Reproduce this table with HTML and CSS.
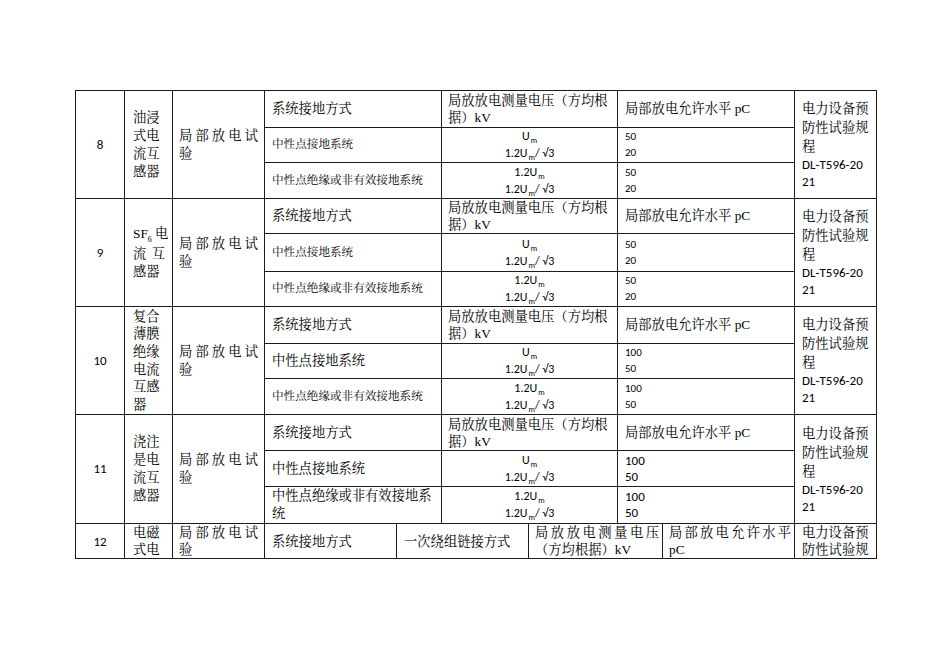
FILE: index.html
```
<!DOCTYPE html>
<html lang="zh-CN">
<head>
<meta charset="utf-8">
<title>局部放电试验</title>
<link rel="stylesheet" href="styles.css">
</head>
<body>
<div class="page">
<table class="spec">
<colgroup>
<col class="c1"><col class="c2"><col class="c3"><col class="c4"><col class="c5"><col class="c6"><col class="c7"><col class="c8"><col class="c9"><col class="c10">
</colgroup>
<tbody>
<!-- 8 -->
<tr class="h37">
<td rowspan="3" class="num">8</td>
<td rowspan="3" class="name"><div>油浸</div><div>式电</div><div>流互</div><div>感器</div></td>
<td rowspan="3" class="test"><div class="jl">局部放电试</div><div>验</div></td>
<td colspan="2" class="lbl">系统接地方式</td>
<td colspan="2" class="hdr">局放放电测量电压（方均根据）kV</td>
<td colspan="2" class="hdr2">局部放电允许水平 pC</td>
<td rowspan="3" class="std"><div>电力设备预</div><div>防性试验规</div><div>程</div><div class="lat">DL-T596-20</div><div class="lat">21</div></td>
</tr>
<tr class="h35">
<td colspan="2" class="lbl sm">中性点接地系统</td>
<td colspan="2" class="val"><div>U<span class="sb">m</span></div><div>1.2U<span class="sb">m</span>/ √3</div></td>
<td colspan="2" class="lvl"><div>50</div><div>20</div></td>
</tr>
<tr class="h36">
<td colspan="2" class="lbl sm">中性点绝缘或非有效接地系统</td>
<td colspan="2" class="val"><div>1.2U<span class="sb">m</span></div><div>1.2U<span class="sb">m</span>/ √3</div></td>
<td colspan="2" class="lvl"><div>50</div><div>20</div></td>
</tr>
<!-- 9 -->
<tr class="h35">
<td rowspan="3" class="num">9</td>
<td rowspan="3" class="name"><div class="nw">SF<span class="sb6">6</span> 电</div><div class="jl">流互</div><div>感器</div></td>
<td rowspan="3" class="test"><div class="jl">局部放电试</div><div>验</div></td>
<td colspan="2" class="lbl">系统接地方式</td>
<td colspan="2" class="hdr">局放放电测量电压（方均根据）kV</td>
<td colspan="2" class="hdr2">局部放电允许水平 pC</td>
<td rowspan="3" class="std"><div>电力设备预</div><div>防性试验规</div><div>程</div><div class="lat">DL-T596-20</div><div class="lat">21</div></td>
</tr>
<tr class="h38">
<td colspan="2" class="lbl sm">中性点接地系统</td>
<td colspan="2" class="val"><div>U<span class="sb">m</span></div><div>1.2U<span class="sb">m</span>/ √3</div></td>
<td colspan="2" class="lvl"><div>50</div><div>20</div></td>
</tr>
<tr class="h34">
<td colspan="2" class="lbl sm">中性点绝缘或非有效接地系统</td>
<td colspan="2" class="val"><div>1.2U<span class="sb">m</span></div><div>1.2U<span class="sb">m</span>/ √3</div></td>
<td colspan="2" class="lvl"><div>50</div><div>20</div></td>
</tr>
<!-- 10 -->
<tr class="h37">
<td rowspan="3" class="num">10</td>
<td rowspan="3" class="name tight"><div>复合</div><div>薄膜</div><div>绝缘</div><div>电流</div><div>互感</div><div>器</div></td>
<td rowspan="3" class="test"><div class="jl">局部放电试</div><div>验</div></td>
<td colspan="2" class="lbl">系统接地方式</td>
<td colspan="2" class="hdr">局放放电测量电压（方均根据）kV</td>
<td colspan="2" class="hdr2">局部放电允许水平 pC</td>
<td rowspan="3" class="std"><div>电力设备预</div><div>防性试验规</div><div>程</div><div class="lat">DL-T596-20</div><div class="lat">21</div></td>
</tr>
<tr class="h35">
<td colspan="2" class="lbl">中性点接地系统</td>
<td colspan="2" class="val"><div>U<span class="sb">m</span></div><div>1.2U<span class="sb">m</span>/ √3</div></td>
<td colspan="2" class="lvl"><div>100</div><div>50</div></td>
</tr>
<tr class="h36">
<td colspan="2" class="lbl sm">中性点绝缘或非有效接地系统</td>
<td colspan="2" class="val"><div>1.2U<span class="sb">m</span></div><div>1.2U<span class="sb">m</span>/ √3</div></td>
<td colspan="2" class="lvl"><div>100</div><div>50</div></td>
</tr>
<!-- 11 -->
<tr class="h36">
<td rowspan="3" class="num">11</td>
<td rowspan="3" class="name"><div>浇注</div><div>是电</div><div>流互</div><div>感器</div></td>
<td rowspan="3" class="test"><div class="jl">局部放电试</div><div>验</div></td>
<td colspan="2" class="lbl">系统接地方式</td>
<td colspan="2" class="hdr">局放放电测量电压（方均根据）kV</td>
<td colspan="2" class="hdr2">局部放电允许水平 pC</td>
<td rowspan="3" class="std"><div>电力设备预</div><div>防性试验规</div><div>程</div><div class="lat">DL-T596-20</div><div class="lat">21</div></td>
</tr>
<tr class="h36">
<td colspan="2" class="lbl">中性点接地系统</td>
<td colspan="2" class="val"><div>U<span class="sb">m</span></div><div>1.2U<span class="sb">m</span>/ √3</div></td>
<td colspan="2" class="lvl big"><div>100</div><div>50</div></td>
</tr>
<tr class="h36">
<td colspan="2" class="lbl wrap">中性点绝缘或非有效接地系统</td>
<td colspan="2" class="val"><div>1.2U<span class="sb">m</span></div><div>1.2U<span class="sb">m</span>/ √3</div></td>
<td colspan="2" class="lvl big"><div>100</div><div>50</div></td>
</tr>
<!-- 12 -->
<tr class="h35 last">
<td class="num">12</td>
<td class="name top"><div>电磁</div><div>式电</div></td>
<td class="test top"><div class="jl">局部放电试</div><div>验</div></td>
<td class="lbl">系统接地方式</td>
<td colspan="2" class="lbl">一次绕组链接方式</td>
<td colspan="2" class="hdr3 top"><div class="jl">局放放电测量电压</div><div>（方均根据）kV</div></td>
<td class="hdr3 top"><div class="jl">局部放电允许水平</div><div>pC</div></td>
<td class="std top"><div>电力设备预</div><div>防性试验规</div></td>
</tr>
</tbody>
</table>
</div>
</body>
</html>
```
FILE: styles.css
```
html, body {
  margin: 0;
  background: #ffffff;
}
body {
  font-family: "Liberation Serif", "Noto Serif CJK SC", "Noto Sans CJK SC", serif;
  color: #000;
}
.page {
  padding: 90px 0 0 75px;
}
.spec {
  border-collapse: collapse;
  table-layout: fixed;
  width: 802px;
}
.c1 { width: 49px; }
.c2 { width: 48px; }
.c3 { width: 92px; }
.c4 { width: 132px; }
.c5 { width: 45px; }
.c6 { width: 87px; }
.c7 { width: 89px; }
.c8 { width: 45px; }
.c9 { width: 132px; }
.c10 { width: 82px; }

.spec td {
  border: 1px solid #1c1c1c;
  padding: 0;
  font-size: 13.3px;
  line-height: 18px;
  vertical-align: middle;
  overflow: hidden;
}
.h34 { height: 34px; }
.h35 { height: 35px; }
.h36 { height: 36px; }
.h37 { height: 37px; }
.h38 { height: 38px; }

.spec td.num {
  text-align: center;
  font-family: Carlito, Lato, "Liberation Sans", sans-serif;
  font-size: 13px;
}
.spec td.name {
  padding: 0 7px 0 8px;
}
.spec td.name.tight {
  line-height: 17.6px;
}
.nw { white-space: nowrap; }
.jl {
  text-align: justify;
  text-align-last: justify;
  white-space: nowrap;
}
.spec td.test {
  padding: 0 6px;
}
.spec td.lbl {
  padding: 0 6px 0 7px;
}
.spec td.sm {
  font-size: 11.6px;
}
.spec td.hdr {
  padding: 0 6px 0 6px;
  line-height: 17px;
}
.spec td.hdr2 {
  padding: 0 6px 0 7px;
}
.spec td.hdr3 {
  padding: 0 3px 0 6px;
}
.spec td.val {
  text-align: center;
  font-family: Carlito, Lato, "Liberation Sans", sans-serif;
  font-size: 12px;
  line-height: 16px;
}
.sb {
  font-size: 8px;
  position: relative;
  top: 3px;
  margin-left: 1px;
}
.sb6 {
  font-size: 8px;
  position: relative;
  top: 4px;
}
.spec td.lvl {
  padding: 0 6px 0 7px;
  font-family: Carlito, Lato, "Liberation Sans", sans-serif;
  font-size: 11px;
  line-height: 16px;
}
.spec td.lvl.big {
  font-size: 13px;
}
.spec td.std {
  padding: 0 4px 0 7px;
  line-height: 19px;
}
.spec td.std .lat {
  line-height: 17px;
}
.lat {
  font-family: Carlito, Lato, "Liberation Sans", sans-serif;
  font-size: 13px;
}
.spec td.top {
  vertical-align: top;
}
.last td {
  line-height: 17px;
}
.spec .last td.std {
  line-height: 17px;
}
```
